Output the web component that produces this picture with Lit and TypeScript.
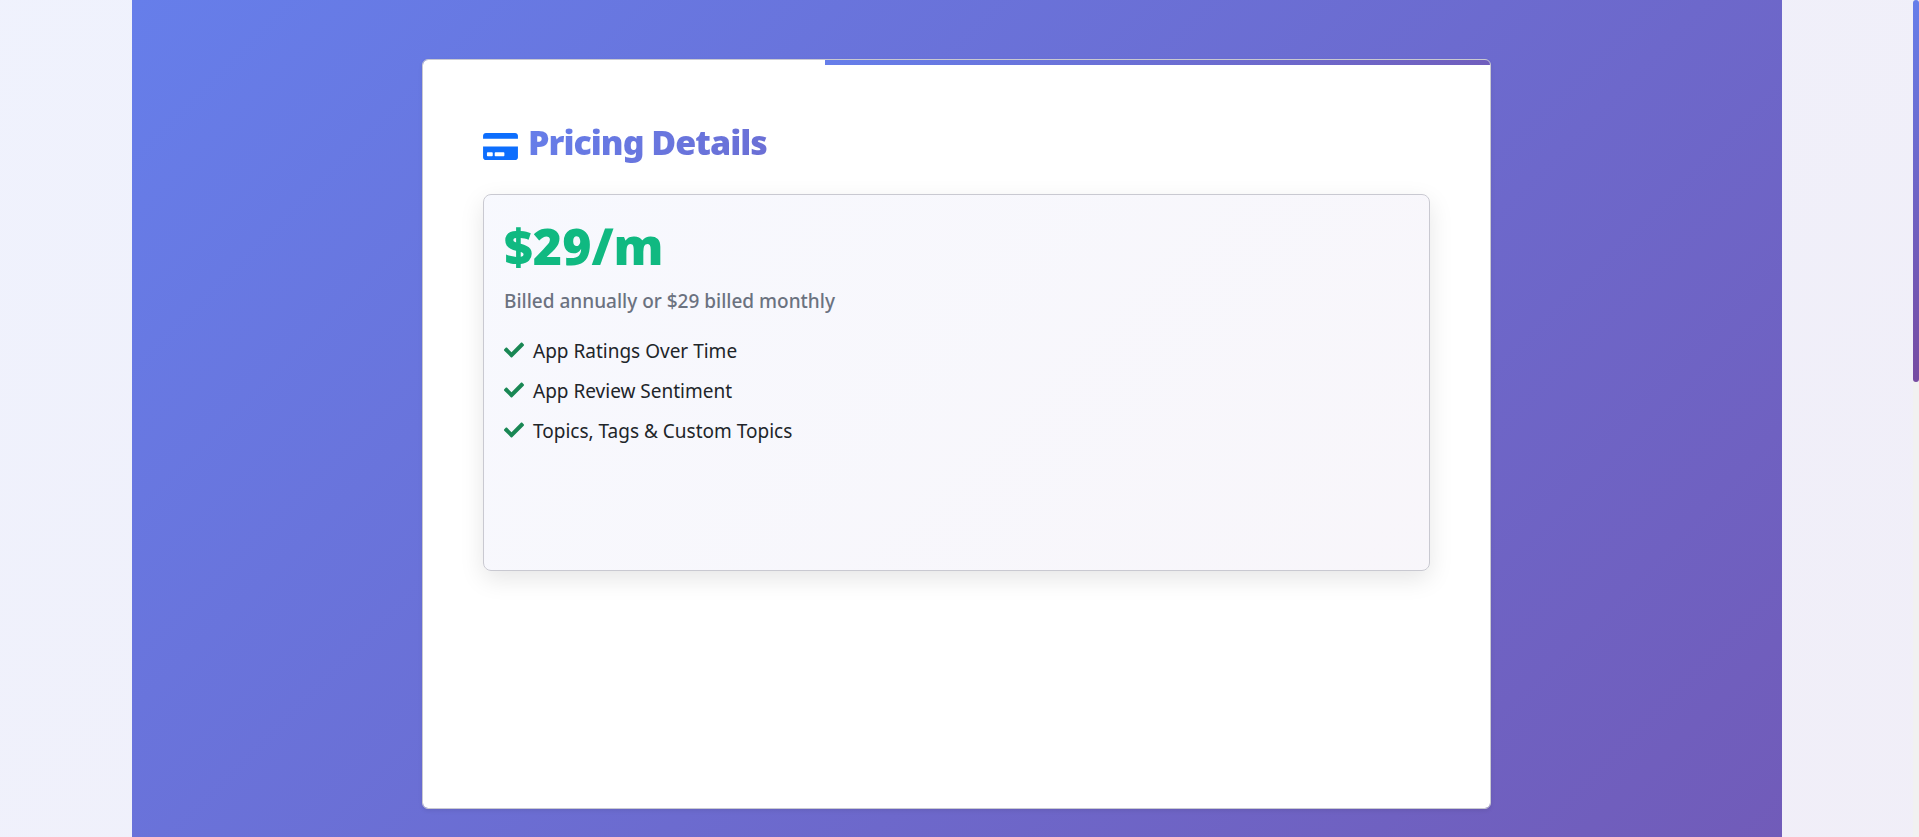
import { LitElement, html, css } from "lit";
import { customElement, property } from "lit/decorators.js";

@customElement("check-item")
class CheckItem extends LitElement {
  static styles = css`
    :host {
      display: flex;
      align-items: center;
      gap: 9px;
      line-height: 30px;
    }
    .check {
      flex: none;
      width: 20px;
      height: 20px;
      margin-bottom: 2px;
      fill: #198754;
    }
  `;

  render() {
    return html`
      <svg class="check" viewBox="0 0 512 512" aria-hidden="true">
        <path
          d="M173.898 439.404l-166.4-166.4c-9.997-9.997-9.997-26.206 0-36.204l36.203-36.204c9.997-9.998 26.207-9.998 36.204 0L192 312.69 432.095 72.596c9.997-9.997 26.207-9.997 36.204 0l36.203 36.204c9.997 9.997 9.997 26.206 0 36.204l-294.4 294.401c-9.998 9.997-26.207 9.997-36.204-.001z"
        ></path>
      </svg>
      <span><slot></slot></span>
    `;
  }
}

@customElement("app-root")
class AppRoot extends LitElement {
  @property() price = "$29/m";
  @property() billing = "Billed annually or $29 billed monthly";
  @property({ attribute: false }) features = [
    "App Ratings Over Time",
    "App Review Sentiment",
    "Topics, Tags & Custom Topics",
  ];

  static styles = css`
    :host {
      display: grid;
      grid-template-columns: 1fr 6px;
      height: 100vh;
      font-family: "Segoe UI", "Noto Sans", sans-serif;
      font-size: 19px;
      color: #212529;
      background: #fff;
    }
    * {
      box-sizing: border-box;
    }
    .viewport {
      min-height: 0;
      overflow-y: auto;
      scrollbar-width: none;
    }
    .track {
      background: #f1f1f1;
    }
    .thumb {
      height: 45.6%;
      background: linear-gradient(180deg, #667eea, #764ba2);
      border-radius: 3px;
    }
    .page {
      background: linear-gradient(135deg, rgba(102, 126, 234, 0.1), rgba(118, 75, 162, 0.1));
    }
    .panel {
      max-width: 1650px;
      min-height: 2000px;
      margin: 0 auto;
      padding: 59px 24px;
      background: linear-gradient(135deg, #667eea, #764ba2);
    }
    .card {
      position: relative;
      max-width: 1069px;
      min-height: 750px;
      margin: 0 auto;
      padding: 60px;
      overflow: hidden;
      background: #fff;
      background-clip: padding-box;
      border: 1px solid #c9c9d1;
      border-radius: 6px;
      box-shadow: 0 2px 4px rgba(0, 0, 0, 0.075);
    }
    .shimmer {
      position: absolute;
      top: 0;
      left: 402px;
      width: 100%;
      height: 5px;
      background: linear-gradient(90deg, #667eea, #764ba2);
    }
    .title {
      display: flex;
      align-items: center;
      gap: 10px;
      margin: 0 0 30px;
      font-size: 34px;
      font-weight: 900;
      line-height: 44px;
      letter-spacing: -1px;
    }
    .card-icon {
      flex: none;
      width: 35px;
      height: 31px;
      margin-top: 8px;
      fill: #0d6efd;
    }
    .title-text {
      flex: 1;
      color: transparent;
      background: linear-gradient(135deg, #667eea, #764ba2);
      -webkit-background-clip: text;
      background-clip: text;
    }
    .offer {
      min-height: 377px;
      padding: 20px;
      border: 1px solid #c9c9d1;
      border-radius: 8px;
      background: linear-gradient(135deg, rgba(102, 126, 234, 0.05), rgba(118, 75, 162, 0.05));
      box-shadow: 0 8px 24px rgba(0, 0, 0, 0.1);
    }
    .price {
      margin: 0 0 8px;
      font-size: 50px;
      font-weight: 900;
      line-height: 63px;
      color: #10b981;
    }
    .billing {
      margin: 0 0 20px;
      font-weight: 500;
      line-height: 30px;
      color: #6b7280;
    }
    .features {
      display: grid;
      gap: 10px;
      margin: 0;
      padding: 0;
      list-style: none;
    }
  `;

  render() {
    return html`
      <div class="viewport">
        <div class="page">
          <main class="panel">
            <section class="card">
              <div class="shimmer"></div>
              <h2 class="title">
                <svg class="card-icon" viewBox="0 0 576 512" aria-hidden="true">
                  <path
                    d="M0 432c0 26.5 21.5 48 48 48h480c26.5 0 48-21.5 48-48V256H0v176zm192-68c0-6.6 5.4-12 12-12h136c6.6 0 12 5.4 12 12v40c0 6.6-5.4 12-12 12H204c-6.6 0-12-5.4-12-12v-40zm-128 0c0-6.6 5.4-12 12-12h72c6.6 0 12 5.4 12 12v40c0 6.6-5.4 12-12 12H76c-6.6 0-12-5.4-12-12v-40zM576 80v48H0V80c0-26.5 21.5-48 48-48h480c26.5 0 48 21.5 48 48z"
                  ></path>
                </svg>
                <span class="title-text">Pricing Details</span>
              </h2>
              <div class="offer">
                <p class="price">${this.price}</p>
                <p class="billing">${this.billing}</p>
                <ul class="features">
                  ${this.features.map((f) => html`<li><check-item>${f}</check-item></li>`)}
                </ul>
              </div>
            </section>
          </main>
        </div>
      </div>
      <div class="track" aria-hidden="true"><div class="thumb"></div></div>
    `;
  }
}
